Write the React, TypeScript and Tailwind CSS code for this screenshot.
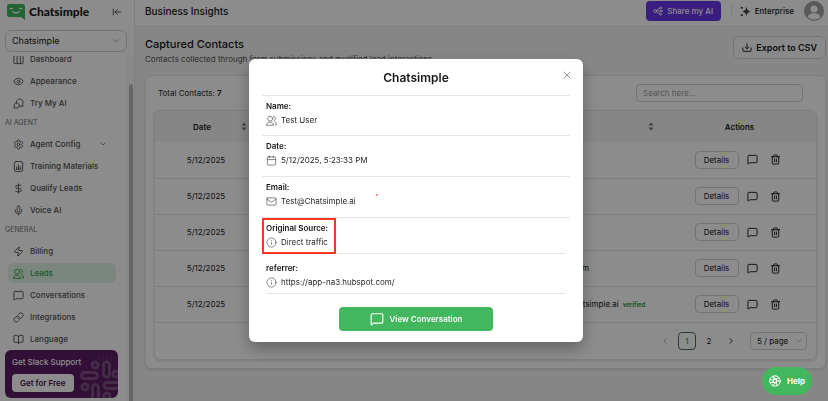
import React from 'react';
import {
  ArrowLeftToLine,
  BookOpen,
  Calendar,
  ChevronDown,
  ChevronLeft,
  ChevronRight,
  DollarSign,
  Eye,
  Info,
  Link,
  Mail,
  MessageSquare,
  Mic,
  Settings,
  Trash2,
  X,
  Zap,
} from 'lucide-react';

interface IconProps {
  className?: string;
  strokeWidth?: number;
}

const stroke = {
  viewBox: '0 0 24 24',
  fill: 'none',
  stroke: 'currentColor',
  strokeLinecap: 'round' as const,
  strokeLinejoin: 'round' as const,
};

const DashboardIcon = ({ className }: IconProps) => (
  <svg {...stroke} strokeWidth={2} className={className}>
    <rect x="2" y="2" width="20" height="19" rx="1" />
    <path d="M9 2v19M16 2v19" />
  </svg>
);

const ChatCircleIcon = ({ className }: IconProps) => (
  <svg {...stroke} strokeWidth={2} className={className}>
    <path d="M7 9a7.500 7.500 0 1 1 14 4.500l1 4.500-5-.5a8 8 0 0 1-3 .5" />
    <path d="M7.500 10.500A5.500 5.500 0 0 0 3 17.500L2 22h6.500a5.500 5.500 0 0 0 5-7.500c-1-2.500-3.500-4-6-4Z" />
  </svg>
);

const ReportIcon = ({ className }: IconProps) => (
  <svg {...stroke} strokeWidth={2} className={className}>
    <rect x="3" y="1" width="18" height="22" rx="4" />
    <path d="M8 17v-4M12 17V9M16 17v-5M7 18h10" />
  </svg>
);

const PeopleIcon = ({ className, strokeWidth = 2 }: IconProps) => (
  <svg {...stroke} strokeWidth={strokeWidth} className={className}>
    <circle cx="9" cy="8" r="5.500" />
    <path d="M1 21.500c1-8 15-8 16 0Z" />
    <path d="M16 2.500a5.500 5.500 0 0 1 2 10M19 14.500c2.500 1.500 4 4 4 7h-2.500" />
  </svg>
);

const ShareIcon = ({ className }: IconProps) => (
  <svg {...stroke} strokeWidth={2} className={className}>
    <circle cx="5" cy="12" r="3.500" />
    <circle cx="18" cy="4.500" r="2.500" />
    <circle cx="20" cy="12" r="2" />
    <circle cx="18" cy="19.500" r="2.500" />
    <path d="m8 10.500 7.500-5M8.500 12H18M8 13.500l7.500 5" />
  </svg>
);

const DownloadIcon = ({ className }: IconProps) => (
  <svg {...stroke} strokeWidth={2.2} className={className}>
    <path d="M12 2v12M8 10l4 4 4-4M2 12v6a2 2 0 0 0 2 2h16a2 2 0 0 0 2-2v-6" />
  </svg>
);

const HelpIcon = ({ className }: IconProps) => (
  <svg {...stroke} strokeWidth={2} className={className}>
    <circle cx="12" cy="12" r="10.500" />
    <circle cx="12" cy="12" r="3.500" />
    <path d="M9 2.500 15.500 11M20 6l-9 2.500M21.500 14 14 9M16 21l-1.500-9M7 21l7-6M2.500 15l9 .5M3 8l6 6M9 2.500 8.500 12" />
  </svg>
);

const SparklesIcon = ({ className }: IconProps) => (
  <svg viewBox="0 0 24 24" fill="currentColor" className={className}>
    <path d="M14 1c1 7 3 9.500 10 11-7 1.500-9 4-10 11-1-7-3-9.500-10-11 7-1.500 9-4 10-11Z" />
    <circle cx="4" cy="4" r="2.500" />
    <circle cx="4" cy="20" r="2.500" />
  </svg>
);

const Logo = () => (
  <svg viewBox="0 0 18 16" className="h-4 w-[18px]">
    <path d="M2.500 0h13A2.500 2.500 0 0 1 18 2.500V16l-4-3H2.500A2.500 2.500 0 0 1 0 10.500v-8A2.500 2.500 0 0 1 2.500 0Z" fill="#3fb55b" />
    <path d="M3 4.500h2M13 4.500h2M6 7.500c1.500 2 4.500 2 6 0" stroke="#fff" strokeWidth="1.300" fill="none" strokeLinecap="round" />
  </svg>
);

const Sorter = () => (
  <svg viewBox="0 0 6 9" className="h-[9px] w-1.5 text-neutral-500" fill="currentColor">
    <path d="M3 0.500 5.500 3.500h-5zM3 8.500 0.500 5.500h5z" />
  </svg>
);

const SlackPattern = () => (
  <svg
    viewBox="0 0 40 44"
    className="absolute bottom-0 right-0 h-11 w-10 text-[#7d5085]"
    fill="none"
    stroke="currentColor"
    strokeWidth="3"
  >
    <circle cx="17" cy="11" r="3" />
    <rect x="25.500" y="8" width="6" height="15" rx="3" />
    <rect x="3.500" y="18.500" width="16" height="6" rx="3" />
    <circle cx="38" cy="20" r="3" />
    <circle cx="7" cy="33" r="3" />
    <rect x="14.500" y="30.500" width="6" height="19" rx="3" />
    <rect x="26" y="28.500" width="18" height="6" rx="3" />
    <circle cx="29" cy="42" r="3" />
    <path d="M17 3h22M21 6h18" strokeWidth="1" strokeDasharray="1 3" />
  </svg>
);

interface NavItem {
  label: string;
  icon: React.ElementType;
  active?: boolean;
  expandable?: boolean;
}

const SECTIONS: { title: string; items: NavItem[] }[] = [
  {
    title: '',
    items: [
      { label: 'Dashboard', icon: DashboardIcon },
      { label: 'Appearance', icon: Eye },
      { label: 'Try My AI', icon: ChatCircleIcon },
    ],
  },
  {
    title: 'AI AGENT',
    items: [
      { label: 'Agent Config', icon: Settings, expandable: true },
      { label: 'Training Materials', icon: ReportIcon },
      { label: 'Qualify Leads', icon: DollarSign },
      { label: 'Voice AI', icon: Mic },
    ],
  },
  {
    title: 'GENERAL',
    items: [
      { label: 'Billing', icon: Zap },
      { label: 'Leads', icon: PeopleIcon, active: true },
      { label: 'Conversations', icon: MessageSquare },
      { label: 'Integrations', icon: Link },
      { label: 'Language', icon: BookOpen },
    ],
  },
];

const CONTACTS = [
  { id: 1, date: '5/12/2025', email: '' },
  { id: 2, date: '5/12/2025', email: '' },
  { id: 3, date: '5/12/2025', email: '' },
  { id: 4, date: '5/12/2025', email: 'a@test.com' },
  { id: 5, date: '5/12/2025', email: 'Test@Chatsimple.ai', verified: true },
];

function Sidebar() {
  return (
    <aside className="flex w-[135px] shrink-0 flex-col border-r border-neutral-200 bg-white">
      <div className="flex h-[30px] shrink-0 items-center justify-between pb-1.5 pl-[7px] pr-3">
        <div className="flex items-center gap-1">
          <Logo />
          <span className="font-['Lato'] text-[12px] font-black text-neutral-900">Chatsimple</span>
        </div>
        <button type="button" aria-label="Collapse sidebar">
          <ArrowLeftToLine className="h-2.5 w-2.5 text-neutral-700" />
        </button>
      </div>

      <div className="relative ml-[5px] mr-[7px] shrink-0">
        <select
          aria-label="Chatbot"
          className="block h-[22px] w-full appearance-none rounded-md border border-neutral-300 bg-white px-1.5 text-[9px] text-neutral-900"
        >
          <option>Chatsimple</option>
        </select>
        <ChevronDown className="pointer-events-none absolute right-1.5 top-1.5 h-2.5 w-2.5 text-neutral-400" />
      </div>

      <div className="mt-1 flex min-h-0 flex-1">
        <div className="flex min-w-0 flex-1 flex-col pl-[5px]">
          <nav className="min-h-0 flex-1 overflow-hidden">
            <div className="-mt-[7px] flex flex-col gap-0.5">
              {SECTIONS.map(section => (
                <React.Fragment key={section.title}>
                  {section.title && (
                    <h3 className="flex h-[17px] items-center text-[7px] text-neutral-500">{section.title}</h3>
                  )}
                  {section.items.map(({ label, icon: Icon, active, expandable }) => (
                    <a
                      key={label}
                      href="#"
                      className={`ml-[3px] mr-[10px] flex h-5 shrink-0 items-center gap-1.5 rounded-md px-[5px] text-[8px] font-medium ${
                        active ? 'bg-[#def5e6] text-[#2fa34c]' : 'text-neutral-600'
                      }`}
                    >
                      <Icon className="h-[11px] w-[11px] shrink-0" />
                      <span className="whitespace-nowrap">{label}</span>
                      {expandable && <ChevronDown className="ml-auto mr-1 h-2 w-2" />}
                    </a>
                  ))}
                </React.Fragment>
              ))}
            </div>
          </nav>

          <div className="relative mb-[3px] mr-2 h-12 shrink-0 overflow-hidden rounded-md bg-[#5c1c63] px-[7px] pt-1.5">
            <SlackPattern />
            <p className="relative text-[8px] font-medium leading-3 text-white">Get Slack Support</p>
            <button
              type="button"
              className="relative mt-1.5 h-[18px] rounded-sm bg-white px-2 text-[8px] font-semibold text-[#4a154b]"
            >
              Get for Free
            </button>
          </div>
        </div>
        <div className="w-2 shrink-0 bg-neutral-50 pl-[3px] pt-7">
          <div className="h-full w-1 rounded-t-full bg-[#bcbcbc]" />
        </div>
      </div>
    </aside>
  );
}

function Header() {
  return (
    <header className="flex h-[27px] shrink-0 items-center border-b border-neutral-200 bg-white pb-1 pl-2.5 pr-1">
      <h1 className="text-[10px] font-medium text-neutral-900">Business Insights</h1>
      <button
        type="button"
        className="ml-auto flex h-5 w-[75px] items-center justify-center gap-1 rounded-sm bg-[#6b35ec] text-[8px] font-medium text-white"
      >
        <ShareIcon className="h-2.5 w-2.5" />
        Share my AI
      </button>
      <div className="ml-2.5 flex h-3 items-center gap-1 border-l border-neutral-200 pl-2 text-[8px] font-medium text-neutral-900">
        <SparklesIcon className="h-[11px] w-[11px] text-neutral-700" />
        Enterprise
      </div>
      <div className="ml-2.5 flex h-5 w-5 items-center justify-center overflow-hidden rounded-full bg-[#a3a3a8]">
        <svg viewBox="0 0 20 20" className="h-5 w-5" fill="#fff">
          <circle cx="10" cy="8" r="3.500" />
          <path d="M3.500 16c1-5 12-5 13 0a9 9 0 0 1-13 0Z" />
        </svg>
      </div>
    </header>
  );
}

function ContactsTable() {
  return (
    <div className="overflow-hidden rounded-md border border-neutral-200 bg-white shadow-sm">
      <table className="w-full table-fixed border-collapse text-[8px] text-neutral-900">
        <colgroup>
          <col className="w-[94px]" />
          <col />
          <col className="w-[127px]" />
          <col className="w-[153px]" />
        </colgroup>
        <thead>
          <tr className="h-[31px] bg-neutral-100">
            <th className="relative font-semibold">
              Date
              <span className="absolute right-0.5 top-[11px]">
                <Sorter />
              </span>
            </th>
            <th className="font-semibold">Name</th>
            <th className="relative pl-2 text-left font-semibold">
              Email
              <span className="absolute right-[9px] top-[11px]">
                <Sorter />
              </span>
            </th>
            <th className="font-semibold">Actions</th>
          </tr>
        </thead>
        <tbody>
          {CONTACTS.map(contact => (
            <tr key={contact.id} className="h-9 border-b border-neutral-200">
              <td className="pl-2 text-center">{contact.date}</td>
              <td className="text-center">Test User</td>
              <td className="whitespace-nowrap pl-2">
                {contact.email}
                {contact.verified && <span className="ml-1 text-[6px] font-bold text-[#2fa34c]">verified</span>}
              </td>
              <td>
                <div className="flex items-center justify-center gap-2 pr-1">
                  <button type="button" className="h-[18px] w-11 rounded-sm border border-neutral-300 text-[8px]">
                    Details
                  </button>
                  <button type="button" aria-label="Conversation">
                    <MessageSquare className="h-[11px] w-[11px]" />
                  </button>
                  <button type="button" aria-label="Delete" className="ml-1">
                    <Trash2 className="h-[11px] w-[11px]" />
                  </button>
                </div>
              </td>
            </tr>
          ))}
        </tbody>
      </table>

      <div className="flex h-9 items-center justify-end pr-[9px] text-[8px] text-neutral-900">
        <button type="button" aria-label="Previous page" className="mr-2 text-neutral-400">
          <ChevronLeft className="h-2.5 w-2.5" />
        </button>
        <button type="button" className="h-[18px] w-[18px] rounded-sm border border-[#4b6b54] font-medium text-[#2fa34c]">
          1
        </button>
        <button type="button" className="ml-1 h-[18px] w-[18px]">
          2
        </button>
        <button type="button" aria-label="Next page" className="ml-2">
          <ChevronRight className="h-2.5 w-2.5" />
        </button>
        <div className="relative ml-3.5">
          <select
            aria-label="Page size"
            className="block h-[18px] w-[57px] appearance-none rounded-sm border border-neutral-300 bg-white pl-1.5 text-[8px]"
          >
            <option>5 / page</option>
          </select>
          <ChevronDown className="pointer-events-none absolute right-1 top-[5px] h-2 w-2 text-neutral-400" />
        </div>
      </div>
    </div>
  );
}

interface DetailProps {
  label: string;
  icon: React.ElementType;
  className: string;
  children: React.ReactNode;
}

function Detail({ label, icon: Icon, className, children }: DetailProps) {
  return (
    <div className={`text-[8px] leading-[14px] text-neutral-900 ${className}`}>
      <dt className="font-semibold">{label}:</dt>
      <dd className="flex items-center gap-1 text-neutral-800">
        <Icon className="h-[11px] w-[11px] text-neutral-600" strokeWidth={1.5} />
        {children}
      </dd>
    </div>
  );
}

function ContactModal() {
  return (
    <div className="fixed inset-0 flex items-start justify-center bg-black/45 pl-1 pt-[59px]">
      <div
        role="dialog"
        aria-labelledby="contact-title"
        className="relative w-[334px] rounded-md bg-white px-[13px] pb-[11px] shadow-[0_6px_16px_rgba(0,0,0,0.3)]"
      >
        <h2 id="contact-title" className="flex h-9 items-center justify-center pt-0.5 text-[12px] font-semibold text-neutral-900">
          Chatsimple
        </h2>
        <button type="button" aria-label="Close" className="absolute right-2.5 top-2.5 text-neutral-500">
          <X className="h-3 w-3" strokeWidth={1.5} />
        </button>

        <dl>
          <Detail label="Name" icon={PeopleIcon} className="h-10 border-t border-neutral-200 px-1 pt-[3px]">
            Test User
          </Detail>
          <Detail label="Date" icon={Calendar} className="h-[41px] border-t border-neutral-200 px-1 pt-[3px]">
            5/12/2025, 5:23:33 PM
          </Detail>
          <Detail label="Email" icon={Mail} className="h-[41px] border-t border-neutral-200 px-1 pt-[3px]">
            Test@Chatsimple.ai
            <span className="ml-4 h-0.5 w-0.5 self-start rounded-full bg-red-400" />
          </Detail>
          <div className="relative border-t border-neutral-200">
            <Detail label="Original Source" icon={Info} className="mx-1 h-9 border-b border-neutral-200 pt-[3px]">
              Direct traffic
            </Detail>
            <div className="absolute left-0 top-0 h-9 w-[74px] border-2 border-[#f5371f]" />
          </div>
          <Detail label="referrer" icon={Info} className="mx-1 h-10 border-b border-neutral-200 pt-[7px]">
            https://app-na3.hubspot.com/
          </Detail>
        </dl>

        <button
          type="button"
          className="mx-auto mt-[13px] flex h-6 w-[154px] items-center justify-center gap-1.5 rounded-sm bg-[#43b75d] text-[8px] font-semibold text-white"
        >
          <MessageSquare className="h-3.5 w-3.5" />
          View Conversation
        </button>
      </div>
    </div>
  );
}

export default function App() {
  return (
    <div className="flex h-screen overflow-hidden bg-neutral-100 font-['Inter',sans-serif]">
      <Sidebar />

      <div className="flex min-w-0 flex-1 flex-col">
        <Header />
        <main className="flex-1 pl-2.5 pr-0.5 pt-[9px]">
          <div className="flex items-start justify-between">
            <div>
              <h2 className="text-[11px] font-medium leading-4 text-neutral-900">Captured Contacts</h2>
              <p className="text-[8px] leading-[14px] text-neutral-600">
                Contacts collected through form submissions and qualified lead interactions.
              </p>
            </div>
            <button
              type="button"
              className="flex h-[23px] items-center gap-1 rounded-md border border-neutral-300 bg-neutral-50 px-2 text-[9px] font-semibold text-neutral-900"
            >
              <DownloadIcon className="h-2.5 w-2.5" />
              Export to CSV
            </button>
          </div>

          <section className="mt-[9px] rounded-md border border-neutral-200 bg-white px-2 pb-2 shadow-sm">
            <div className="flex h-[34px] items-center justify-between pl-1 pr-3.5">
              <p className="text-[8px] text-neutral-800">
                Total Contacts: <span className="font-semibold">7</span>
              </p>
              <input
                type="text"
                aria-label="Search contacts"
                placeholder="Search here..."
                className="h-[18px] w-[167px] rounded-sm border border-neutral-300 px-1.5 text-[8px] placeholder:text-neutral-400"
              />
            </div>
            <ContactsTable />
          </section>
        </main>
      </div>

      <ContactModal />

      <button
        type="button"
        className="fixed bottom-1.5 right-4 flex h-7 w-[50px] items-center justify-center gap-1.5 rounded-full bg-[#43b75d] text-[8px] font-bold text-white"
      >
        <HelpIcon className="h-3 w-3" />
        Help
      </button>
    </div>
  );
}
